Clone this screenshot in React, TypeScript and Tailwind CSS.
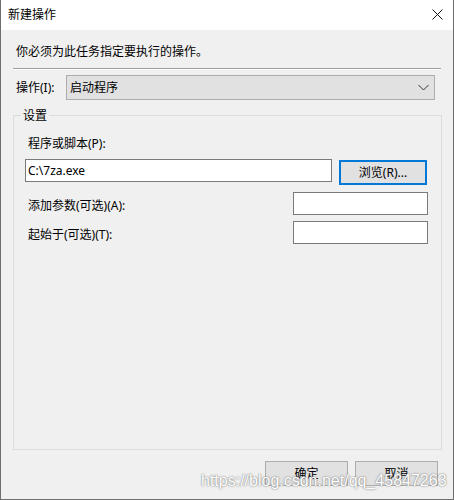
import React from "react";

const font = "font-['Noto_Sans','Noto_Sans_CJK_SC',sans-serif]";

export default function App() {
  return (
    <div
      className={`relative w-[454px] h-[500px] bg-[#f0f0f0] border-x border-b border-[#6e6e6e] text-[12px] leading-[16px] text-black ${font} overflow-hidden`}
    >
      {/* Title bar */}
      <div className="h-[30px] bg-white flex items-center justify-between pl-[7px] pr-[10px]">
        <span>新建操作</span>
        <svg width="11" height="11" viewBox="0 0 11 11" className="mt-[-1px]">
          <path d="M0.5 0.5 L10.5 10.5 M10.5 0.5 L0.5 10.5" stroke="#111" strokeWidth="1" fill="none" />
        </svg>
      </div>

      {/* Instruction */}
      <div className="mt-[14px] pl-[15px]">你必须为此任务指定要执行的操作。</div>

      {/* Separator */}
      <div className="mt-[8px] ml-[12px] w-[428px] h-[2px] border-t border-[#a0a0a0] border-b border-b-white" />

      {/* Action row */}
      <div className="mt-[5px] pl-[15px] flex items-center">
        <span className="w-[50px]">操作(I):</span>
        <div className="w-[369px] h-[25px] bg-[#e1e1e1] border border-[#adadad] flex items-center justify-between pl-[3px] pr-[5px]">
          <span>启动程序</span>
          <svg width="11" height="7" viewBox="0 0 11 7">
            <path d="M0.5 1 L5.5 6 L10.5 1" stroke="#333" strokeWidth="1" fill="none" />
          </svg>
        </div>
      </div>

      {/* Group box */}
      <div className="relative mt-[15px] ml-[12px] w-[429px] h-[335px] border border-[#dcdcdc] pl-[11px]">
        <span className="absolute left-[7px] top-[-8px] px-[2px] bg-[#f0f0f0]">设置</span>

        <div className="pt-[20px] pl-[3px]">程序或脚本(P):</div>
        <div className="mt-[7px] flex items-start">
          <div className="w-[307px] h-[23px] bg-white border border-[#7a7a7a] flex items-center pl-[2px]">
            C:\7za.exe
          </div>
          <div className="ml-[7px] mt-[1px] w-[88px] h-[25px] bg-[#e1e1e1] border-2 border-[#0078d7] flex items-center justify-center">
            浏览(R)...
          </div>
        </div>

        <div className="mt-[7px] flex items-center">
          <span className="pl-[3px] w-[268px] mt-[5px]">添加参数(可选)(A):</span>
          <div className="w-[135px] h-[23px] bg-white border border-[#7a7a7a]" />
        </div>
        <div className="mt-[6px] flex items-center">
          <span className="pl-[3px] w-[268px] mt-[5px]">起始于(可选)(T):</span>
          <div className="w-[135px] h-[23px] bg-white border border-[#7a7a7a]" />
        </div>
      </div>

      {/* Bottom buttons */}
      <div className="mt-[11px] flex justify-end gap-[7px] pr-[15px]">
        <div className="w-[83px] h-[25px] bg-[#e1e1e1] border border-[#adadad] flex items-center justify-center">
          确定
        </div>
        <div className="w-[83px] h-[25px] bg-[#e1e1e1] border border-[#adadad] flex items-center justify-center">
          取消
        </div>
      </div>

      {/* Watermark */}
      <div className="absolute left-[200px] top-[471px] text-[16px] leading-[20px] font-['Liberation_Sans',sans-serif] text-white [text-shadow:0_0_2px_#7a7a7a,0_0_1px_#9a9a9a] pointer-events-none">
        https://blog.csdn.net/qq_45847263
      </div>
    </div>
  );
}
